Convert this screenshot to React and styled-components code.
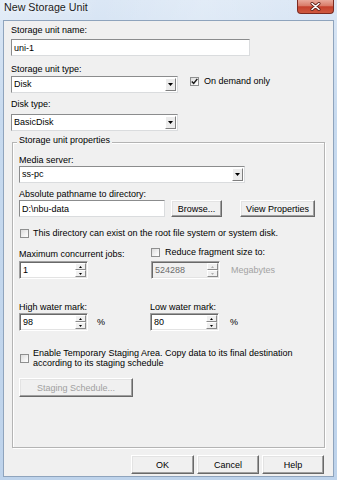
import React from "react";
import styled, { createGlobalStyle } from "styled-components";

const FONT = `"Liberation Sans", Arial, sans-serif`;

const GlobalStyle = createGlobalStyle`
  html, body {
    margin: 0;
    padding: 0;
    width: 337px;
    height: 480px;
    overflow: hidden;
    background: #bcd1ea;
  }
  body {
    font-family: ${FONT};
    font-size: 9px;
    color: #000;
  }
`;

const Window = styled.div`
  width: 337px;
  height: 480px;
  display: flex;
  flex-direction: column;
  box-sizing: border-box;
  background: linear-gradient(180deg, #dbe7f5 0%, #c7daef 25%, #bed3eb 100%);
`;

const TitleBar = styled.div`
  height: 20px;
  flex: none;
  display: flex;
  align-items: flex-start;
  padding-left: 4px;
  box-sizing: border-box;
  background: linear-gradient(100deg, rgba(255,255,255,0.25) 0%, rgba(255,255,255,0) 30%, rgba(255,255,255,0.2) 60%, rgba(255,255,255,0) 100%);
`;

const Title = styled.div`
  margin-top: 1px;
  font-size: 10.7px;
  line-height: 13px;
  color: #1b1b1b;
  text-shadow: 0 0 5px rgba(255, 255, 255, 0.95);
  white-space: nowrap;
`;

const CloseButton = styled.div`
  margin-left: auto;
  margin-right: 3px;
  width: 37px;
  height: 14px;
  box-sizing: border-box;
  border: 1px solid #7b2a20;
  border-top: none;
  border-radius: 0 0 4px 4px;
  background: linear-gradient(180deg, #e9a99b 0%, #d97b68 45%, #c5402c 52%, #cf5a40 100%);
  display: flex;
  align-items: center;
  justify-content: center;
`;

const Client = styled.div`
  flex: 1;
  min-height: 0;
  margin: 0 3px 3px 3px;
  background: #f0f0f0;
  border: 1px solid #8fa4bd;
  box-sizing: border-box;
  padding: 4px 8px 0 7px;
  display: flex;
  flex-direction: column;
  align-items: flex-start;
`;

const Label = styled.div`
  line-height: 11px;
  margin-top: ${(p) => p.$mt || 0}px;
  white-space: nowrap;
`;

const TextField = styled.input`
  display: block;
  box-sizing: border-box;
  width: ${(p) => p.$w}px;
  height: 17px;
  margin: ${(p) => p.$mt || 0}px 0 0 0;
  padding: 0 0 0 2px;
  border: 1px solid;
  border-color: #8b8c8d #dadcde #dadcde #8b8c8d;
  background: #fff;
  font-family: ${FONT};
  font-size: 9px;
  color: #000;
  outline: none;
  flex: none;
`;

const ComboBox = styled.div`
  display: flex;
  flex: none;
  width: ${(p) => p.$w}px;
  height: 17px;
  box-sizing: border-box;
  margin-top: ${(p) => p.$mt || 0}px;
  border: 1px solid;
  border-color: #8b8c8d #dadcde #dadcde #8b8c8d;
  background: #fff;
`;

const ComboText = styled.div`
  flex: 1;
  padding-left: 2px;
  line-height: 15px;
  white-space: nowrap;
`;

const DropButton = styled.div`
  width: 11px;
  margin: 1px 1px 1px 0;
  box-sizing: border-box;
  border: 1px solid;
  border-color: #ffffff #7f7f7f #7f7f7f #ffffff;
  background: #ececec;
  display: flex;
  align-items: center;
  justify-content: center;
`;

const CheckBox = styled.span`
  flex: none;
  width: 9px;
  height: 9px;
  box-sizing: border-box;
  border: 1px solid #8e8f8f;
  background: linear-gradient(135deg, #dcdcdc 0%, #f6f6f6 70%, #ffffff 100%);
  display: flex;
  align-items: center;
  justify-content: center;
  margin-left: ${(p) => p.$ml || 0}px;
`;

const CheckRow = styled.div`
  display: flex;
  align-items: center;
  gap: ${(p) => p.$gap || 4}px;
  margin-top: ${(p) => p.$mt || 0}px;
  margin-left: ${(p) => p.$ml || 0}px;
  line-height: 11px;
  white-space: nowrap;
`;

const WrapText = styled.div`
  line-height: 10px;
  max-width: 280px;
  white-space: normal;
`;

const Row = styled.div`
  display: flex;
  align-items: ${(p) => p.$align || "flex-start"};
  margin-top: ${(p) => p.$mt || 0}px;
`;

const Column = styled.div`
  display: flex;
  flex-direction: column;
  align-items: flex-start;
  width: ${(p) => p.$w}px;
  flex: none;
`;

const GroupBox = styled.div`
  position: relative;
  margin-top: 11px;
  margin-left: 1px;
  width: 313px;
  box-sizing: border-box;
  border: 1px solid #b4b4b4;
  box-shadow: inset 1px 1px 0 #ffffff, 1px 1px 0 #ffffff;
  padding: 12px 6px 50px 6px;
  display: flex;
  flex-direction: column;
  align-items: flex-start;
`;

const GroupTitle = styled.div`
  position: absolute;
  top: -8px;
  left: 4px;
  padding: 0 2px;
  line-height: 11px;
  background: #f0f0f0;
  white-space: nowrap;
`;

const Button = styled.button`
  flex: none;
  width: ${(p) => p.$w}px;
  height: ${(p) => p.$h || 19}px;
  margin: ${(p) => p.$mt || 0}px 0 0 ${(p) => p.$ml || 0}px;
  box-sizing: border-box;
  border: 1px solid;
  border-color: #ffffff #696969 #696969 #ffffff;
  box-shadow: inset -1px -1px 0 #a0a0a0, inset 1px 1px 0 #e3e3e3;
  background: #f0f0f0;
  padding: 0;
  font-family: ${FONT};
  font-size: 9px;
  color: ${(p) => (p.disabled ? "#a0a0a0" : "#000")};
  display: flex;
  align-items: center;
  justify-content: center;
  white-space: nowrap;
`;

const Spin = styled.div`
  display: flex;
  flex: none;
  width: 69px;
  height: 18px;
  box-sizing: border-box;
  margin-top: ${(p) => p.$mt || 0}px;
  border: 1px solid;
  border-color: #a0a0a0 #ffffff #ffffff #a0a0a0;
  box-shadow: inset 1px 1px 0 #696969, inset -1px -1px 0 #e3e3e3;
  background: ${(p) => (p.$disabled ? "#f0f0f0" : "#ffffff")};
`;

const SpinValue = styled.div`
  flex: 1;
  padding: 1px 0 0 3px;
  line-height: 15px;
  color: ${(p) => (p.$disabled ? "#6d6d6d" : "#000")};
`;

const SpinButtons = styled.div`
  width: 11px;
  margin: 1px 1px 1px 0;
  display: flex;
  flex-direction: column;
`;

const SpinBtn = styled.div`
  flex: 1;
  box-sizing: border-box;
  border: 1px solid;
  border-color: #ffffff #8a8a8a #8a8a8a #ffffff;
  background: #f0f0f0;
  display: flex;
  align-items: center;
  justify-content: center;
`;

const Unit = styled.div`
  margin-left: ${(p) => p.$ml || 0}px;
  line-height: 11px;
  color: ${(p) => (p.$muted ? "#a3a3a3" : "#000")};
  white-space: nowrap;
`;

const Footer = styled.div`
  align-self: stretch;
  display: flex;
  justify-content: flex-end;
  gap: 3px;
  margin-top: 7px;
  padding-right: 1px;
`;

const Arrow = ({ up, color = "#000" }) => (
  <svg width="5" height="3" viewBox="0 0 5 3">
    <polygon points={up ? "2.5,0 5,3 0,3" : "0,0 5,0 2.5,3"} fill={color} />
  </svg>
);

const Combo = ({ w, mt, value }) => (
  <ComboBox $w={w} $mt={mt}>
    <ComboText>{value}</ComboText>
    <DropButton>
      <Arrow />
    </DropButton>
  </ComboBox>
);

const Check = ({ checked, ml }) => (
  <CheckBox $ml={ml}>
    {checked && (
      <svg width="7" height="7" viewBox="0 0 7 7">
        <path d="M0.8 3.4 L2.7 5.4 L6.3 0.9" fill="none" stroke="#1a1a1a" strokeWidth="1.5" />
      </svg>
    )}
  </CheckBox>
);

const SpinBox = ({ value, mt, disabled }) => {
  const c = disabled ? "#b0b0b0" : "#000";
  return (
    <Spin $mt={mt} $disabled={disabled}>
      <SpinValue $disabled={disabled}>{value}</SpinValue>
      <SpinButtons>
        <SpinBtn>
          <svg width="3" height="2" viewBox="0 0 3 2">
            <polygon points="1.5,0 3,2 0,2" fill={c} />
          </svg>
        </SpinBtn>
        <SpinBtn>
          <svg width="3" height="2" viewBox="0 0 3 2">
            <polygon points="0,0 3,0 1.5,2" fill={c} />
          </svg>
        </SpinBtn>
      </SpinButtons>
    </Spin>
  );
};

export default function App() {
  return (
    <>
      <GlobalStyle />
      <Window>
        <TitleBar>
          <Title>New Storage Unit</Title>
          <CloseButton>
            <svg width="11" height="9" viewBox="0 0 11 9">
              <path d="M2 1.5 L9 7.5 M9 1.5 L2 7.5" stroke="#5a1a12" strokeWidth="3" strokeLinecap="round" />
              <path d="M2 1.5 L9 7.5 M9 1.5 L2 7.5" stroke="#ffffff" strokeWidth="1.6" strokeLinecap="round" />
            </svg>
          </CloseButton>
        </TitleBar>
        <Client>
          <Label>Storage unit name:</Label>
          <TextField $w={239} $mt={3} defaultValue="uni-1" readOnly />
          <Label $mt={8}>Storage unit type:</Label>
          <Row $mt={1}>
            <Combo w={167} value="Disk" />
            <CheckRow $ml={12} $gap={5}>
              <Check checked />
              <span>On demand only</span>
            </CheckRow>
          </Row>
          <Label $mt={6}>Disk type:</Label>
          <Combo w={167} mt={4} value="BasicDisk" />

          <GroupBox>
            <GroupTitle>Storage unit properties</GroupTitle>
            <Label>Media server:</Label>
            <Combo w={226} value="ss-pc" />
            <Label $mt={6}>Absolute pathname to directory:</Label>
            <Row>
              <TextField $w={146} defaultValue="D:\nbu-data" readOnly />
              <Button $w={51} $h={17} $ml={6}>Browse...</Button>
              <Button $w={75} $h={17} $ml={18}>View Properties</Button>
            </Row>
            <CheckRow $mt={11} $gap={4}>
              <Check ml={1} />
              <span>This directory can exist on the root file system or system disk.</span>
            </CheckRow>
            <Row $mt={8}>
              <Column $w={132}>
                <Label $mt={2}>Maximum concurrent jobs:</Label>
                <SpinBox value="1" mt={1} />
              </Column>
              <Column $w={150}>
                <CheckRow $gap={5}>
                  <Check />
                  <span>Reduce fragment size to:</span>
                </CheckRow>
                <Row $align="center" $mt={3}>
                  <SpinBox value="524288" disabled />
                  <Unit $ml={11} $muted>Megabytes</Unit>
                </Row>
              </Column>
            </Row>
            <Row $mt={23}>
              <Column $w={131}>
                <Label>High water mark:</Label>
                <Row $align="center">
                  <SpinBox value="98" />
                  <Unit $ml={9}>%</Unit>
                </Row>
              </Column>
              <Column $w={150}>
                <Label>Low water mark:</Label>
                <Row $align="center">
                  <SpinBox value="80" />
                  <Unit $ml={11}>%</Unit>
                </Row>
              </Column>
            </Row>
            <CheckRow $mt={17} $gap={4}>
              <Check ml={1} />
              <WrapText>
                Enable Temporary Staging Area. Copy data to its final destination according to its staging schedule
              </WrapText>
            </CheckRow>
            <Button $w={114} $mt={10} disabled>Staging Schedule...</Button>
          </GroupBox>

          <Footer>
            <Button $w={63}>OK</Button>
            <Button $w={62}>Cancel</Button>
            <Button $w={62}>Help</Button>
          </Footer>
        </Client>
      </Window>
    </>
  );
}
